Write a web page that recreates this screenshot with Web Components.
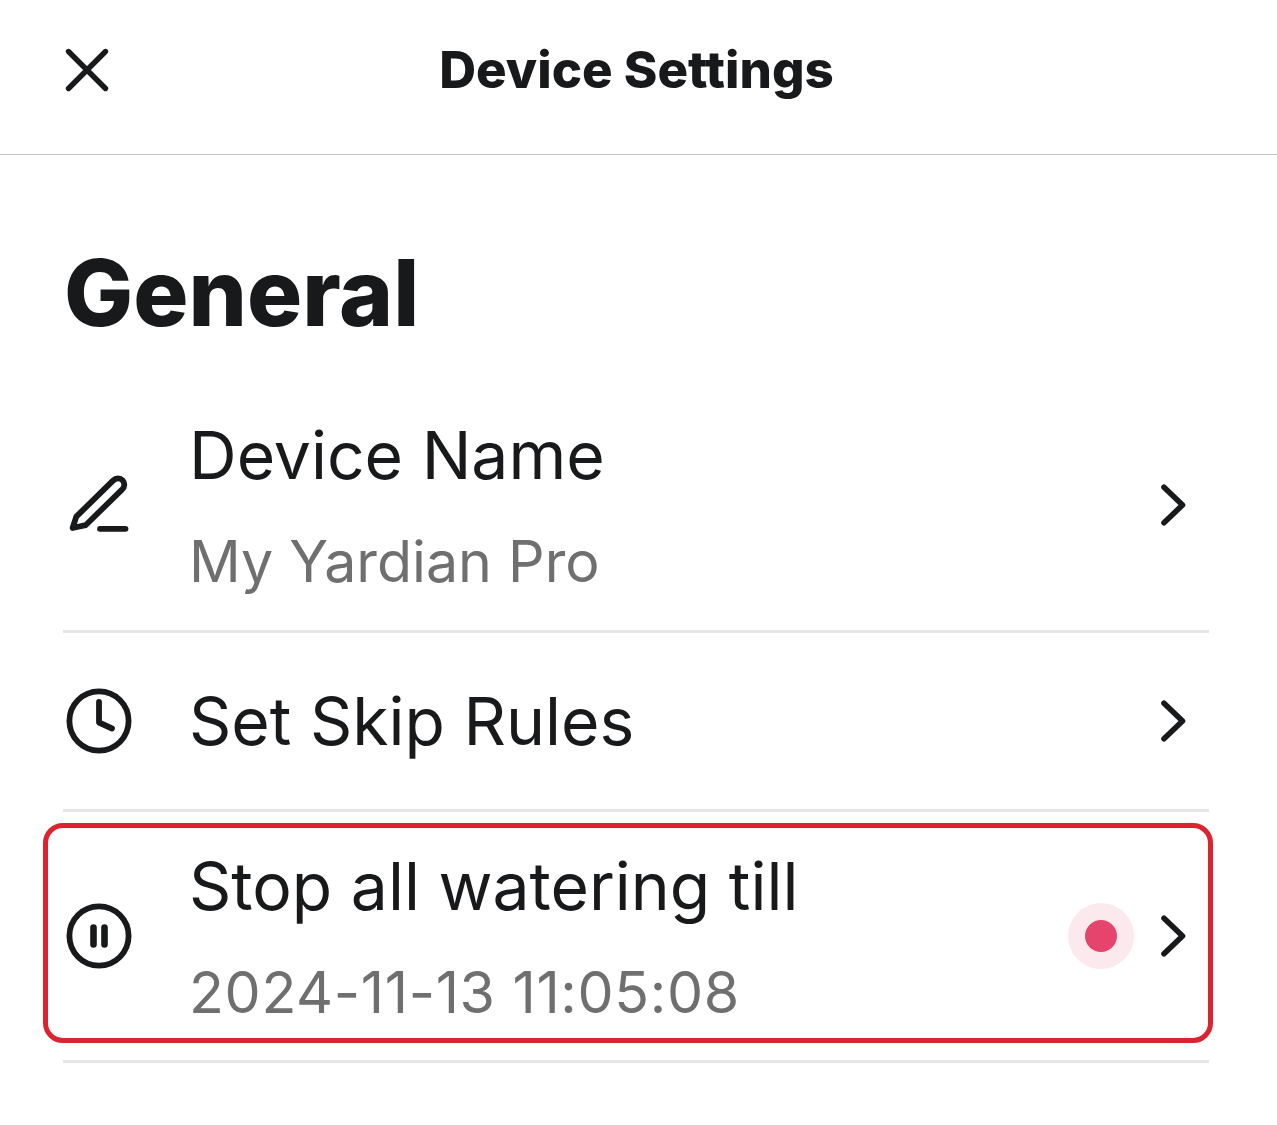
<!DOCTYPE html>
<html><head><meta charset="utf-8"><title>Device Settings</title>
<style>
html,body{margin:0;padding:0;background:#fff;}
body{font-family:Inter,"Liberation Sans",sans-serif;color:#18191a;}
</style></head><body>
<settings-screen>
  <app-header slot="header">Device Settings</app-header>
  <section-title>General</section-title>
  <settings-row height="253" sub="My Yardian Pro" title-text="Device Name" icon="edit"></settings-row>
  <settings-row height="179" title-text="Set Skip Rules" icon="clock"></settings-row>
  <settings-row height="251" sub="2024-11-13 11:05:08" title-text="Stop all watering till" icon="pause" dot highlight></settings-row>
</settings-screen>
<script>
const ICONS={
 edit:'<path d="M5.6 55L9.3 43.6L46 7.6C49 4.6 53 4.6 55.5 7.2C58 9.8 58 14 55 16.6L18.6 52.2Z"/><path d="M33 55.8H58.5"/>',
 clock:'<circle cx="32" cy="32" r="29.6"/><path d="M32 13V33.5L45 39.5"/>',
 pause:'<circle cx="32" cy="32" r="29.6"/><path d="M26.5 23.5V40.5M37.5 23.5V40.5" style="stroke-width:6.6"/>'
};
class SettingsScreen extends HTMLElement{constructor(){super();this.attachShadow({mode:'open'}).innerHTML=`<style>:host{display:block;width:1277px;height:1125px;overflow:hidden;background:#fff}</style><slot name="header"></slot><slot></slot>`;}}
class AppHeader extends HTMLElement{constructor(){super();this.attachShadow({mode:'open'}).innerHTML=`<style>:host{display:grid;grid-template-columns:50px 1fr 50px;align-items:center;height:140px;padding:0 66px 14px 62px;border-bottom:1px solid #c4c4c4}
.t{font:800 51px/58px Inter,sans-serif;text-align:center;color:#18191a}
svg{display:block;width:50px;height:50px;fill:none;stroke:#18191a;stroke-width:5.4;stroke-linecap:round}</style>
<svg viewBox="0 0 50 50"><path d="M6.5 6.5L43.5 43.5M43.5 6.5L6.5 43.5"/></svg><div class="t"><slot></slot></div><span></span>`;}}
class SectionTitle extends HTMLElement{constructor(){super();this.attachShadow({mode:'open'}).innerHTML=`<style>:host{display:block;padding:88px 64px 0;height:137px;font:800 92px/100px Inter,sans-serif;color:#18191a}</style><slot></slot>`;}}
class SettingsRow extends HTMLElement{connectedCallback(){
 const h=this.getAttribute('height'),sub=this.getAttribute('sub'),t=this.getAttribute('title-text'),ic=this.getAttribute('icon');
 const num=sub&&/^\d/.test(sub);
 this.attachShadow({mode:'open'}).innerHTML=`<style>
 :host{display:block;position:relative;margin:0 68px 0 63px;height:${h}px;box-sizing:border-box;border-bottom:3px solid #e6e6e6}
 .row{display:flex;align-items:center;height:100%}
 .icon{width:64px;height:64px;margin-left:4px;flex:none;overflow:visible;fill:none;stroke:#18191a;stroke-width:5.8;stroke-linecap:round;stroke-linejoin:round}
 .text{flex:1;margin-left:58px;display:flex;flex-direction:column;gap:28px}
 .title{font:400 66px/84px Inter,sans-serif;color:#18191a}
 .sub{font:400 57.3px/72px Inter,sans-serif;color:#6f6f6f}
 .sub.num{letter-spacing:.65px}
 .dot{width:66px;height:66px;border-radius:50%;background:#fbe9ee;display:flex;align-items:center;justify-content:center;margin-right:26px}
 .dot i{width:32px;height:32px;border-radius:50%;background:#e5456c;display:block}
 .chev{width:26px;height:42px;margin-right:23px;fill:none;stroke:#18191a;stroke-width:5.6;stroke-linecap:round;stroke-linejoin:round}
 .hl{position:absolute;left:-20px;right:-4px;top:11px;height:220px;box-sizing:border-box;border:5px solid #dc2430;border-radius:20px;pointer-events:none}
 </style><div class="row"><svg class="icon" viewBox="0 0 64 64">${ICONS[ic]}</svg>
 <div class="text"><div class="title">${t}</div>${sub?`<div class="sub${num?' num':''}">${sub}</div>`:''}</div>
 ${this.hasAttribute('dot')?'<div class="dot"><i></i></div>':''}
 <svg class="chev" viewBox="0 0 26 42"><path d="M4 3.2L22.5 21L4 38.8"/></svg></div>
 ${this.hasAttribute('highlight')?'<div class="hl"></div>':''}`;
}}
customElements.define('settings-screen',SettingsScreen);
customElements.define('app-header',AppHeader);
customElements.define('section-title',SectionTitle);
customElements.define('settings-row',SettingsRow);
</script></body></html>
